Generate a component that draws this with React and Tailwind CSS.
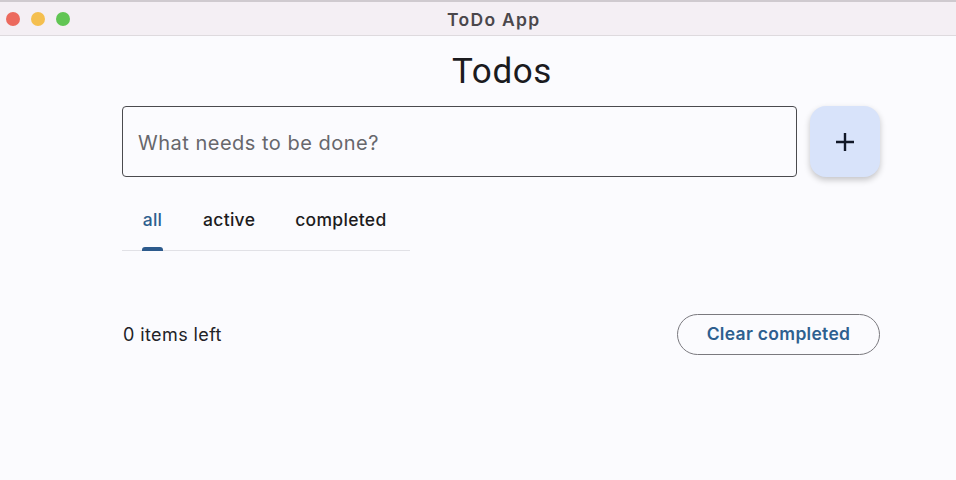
import React from "react";

export default function App() {
  const sf = { fontFamily: "Inter, 'Noto Sans', sans-serif" };
  return (
    <div className="w-[956px] h-[480px] bg-[#fbfbfe] flex flex-col overflow-hidden" style={sf}>
      <div className="h-[36px] shrink-0 bg-[#f4eff4] border-t-2 border-t-[#cfcacf] border-b border-b-[#dedade] flex items-center relative">
        <div className="flex items-center gap-[11px] pl-[6px]">
          <span className="w-[14px] h-[14px] rounded-full bg-[#ec6a5e]" />
          <span className="w-[14px] h-[14px] rounded-full bg-[#f4bf4f]" />
          <span className="w-[14px] h-[14px] rounded-full bg-[#61c554]" />
        </div>
        <div className="absolute left-[447px] top-[5px] text-[17.5px] tracking-[1.3px] font-semibold text-[#4a474b]">ToDo App</div>
      </div>
      <div className="ml-[122px] w-[758px] flex flex-col">
        <h1 className="mt-[15px] h-[42px] text-center text-[35px] tracking-[0.6px] leading-[42px] text-[#1b1b1f] pl-[2px]" style={{ fontFamily: "Roboto, sans-serif" }}>
          Todos
        </h1>
        <div className="mt-[13px] flex gap-[13px]">
          <div className="flex-1 h-[71px] border-[1.5px] border-[#4a4a4e] rounded-[4px] flex items-center pl-[15px]">
            <span className="text-[20px] tracking-[0.5px] text-[#67676c] pt-[3px]">What needs to be done?</span>
          </div>
          <button className="w-[70px] h-[71px] rounded-[16px] bg-[#d8e3fa] flex items-center justify-center shadow-[0_3px_6px_rgba(0,0,0,0.22)]">
            <svg width="20" height="20" viewBox="0 0 20 20">
              <path d="M10 1v18M1 10h18" stroke="#111827" strokeWidth="2.4" fill="none" />
            </svg>
          </button>
        </div>
        <div className="mt-[22px] w-[288px] flex border-b border-[#e1e1e6] h-[52px]">
          <div className="px-[20px] flex flex-col items-center justify-between">
            <span className="text-[17.5px] tracking-[0.3px] font-medium text-[#2e5f8f] leading-[42px]">all</span>
            <span className="w-[21px] h-[4px] rounded-t-[3px] bg-[#2c5a8c] mb-[-1px]" />
          </div>
          <div className="px-[20px] flex flex-col items-center">
            <span className="text-[17.5px] tracking-[0.3px] font-medium text-[#1d1b20] leading-[42px]">active</span>
          </div>
          <div className="px-[20px] flex flex-col items-center">
            <span className="text-[17.5px] tracking-[0.3px] font-medium text-[#1d1b20] leading-[42px]">completed</span>
          </div>
        </div>
        <div className="mt-[63px] flex items-center justify-between">
          <span className="text-[18px] tracking-[0.4px] text-[#222226] pl-[1px]">0 items left</span>
          <button className="w-[203px] h-[41px] rounded-full border border-[#7a797e] text-[17.5px] tracking-[0.3px] font-semibold text-[#2e5f8f]">
            Clear completed
          </button>
        </div>
      </div>
    </div>
  );
}
